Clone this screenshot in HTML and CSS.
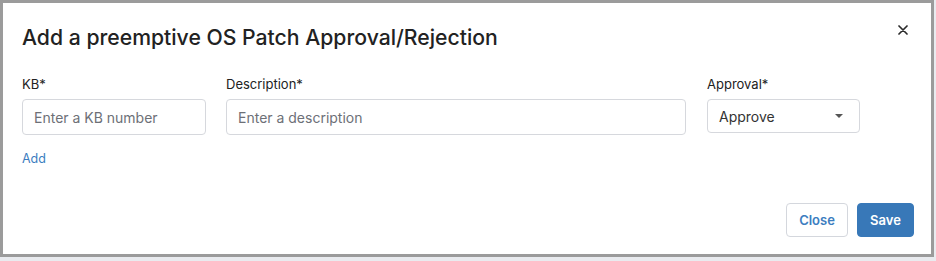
FILE: index.html
```html
<!DOCTYPE html>
<html>
<head>
<meta charset="utf-8">
<link rel="stylesheet" href="styles.css">
</head>
<body>
<div class="modal">
  <div class="header">
    <h1 class="title">Add a preemptive OS Patch Approval/Rejection</h1>
    <button class="close-x" aria-label="Close">
      <svg width="10" height="10" viewBox="0 0 10 10"><path d="M1 1L9 9M9 1L1 9" stroke="#2b2b2b" stroke-width="1.7" stroke-linecap="round"/></svg>
    </button>
  </div>
  <div class="fields">
    <div class="field kb">
      <label class="label">KB*</label>
      <input class="input" type="text" placeholder="Enter a KB number">
    </div>
    <div class="field desc">
      <label class="label">Description*</label>
      <input class="input" type="text" placeholder="Enter a description">
    </div>
    <div class="field approval">
      <label class="label">Approval*</label>
      <div class="select">
        <span class="select-value">Approve</span>
        <span class="caret"></span>
      </div>
    </div>
  </div>
  <a class="add-link" href="#">Add</a>
  <div class="footer">
    <button class="btn btn-secondary">Close</button>
    <button class="btn btn-primary">Save</button>
  </div>
</div>
</body>
</html>
```
FILE: styles.css
```css
html, body {
  margin: 0;
  padding: 0;
  background: #e9ebef;
  font-family: Inter, "Noto Sans", sans-serif;
}
.modal {
  box-sizing: border-box;
  width: 934px;
  height: 257px;
  border: 3px solid #9b9b9b;
  background: #fff;
  padding: 0 0 0 19px;
  display: flex;
  flex-direction: column;
}
.header {
  display: flex;
  justify-content: space-between;
  align-items: flex-start;
  padding-top: 21px;
}
.title {
  margin: 0;
  font-size: 21.2px;
  line-height: 26px;
  font-weight: 500;
  color: #222;
}
.close-x {
  border: 0;
  background: none;
  padding: 0;
  margin: 1px 23px 0 0;
  width: 10px;
  height: 10px;
  display: flex;
}
.fields {
  display: flex;
  margin-top: 26px;
}
.field {
  display: flex;
  flex-direction: column;
}
.kb { width: 184px; margin-right: 20px; }
.desc { width: 460px; margin-right: 21px; }
.approval { width: 153px; }
.label {
  font-size: 13px;
  line-height: 16px;
  color: #222;
  margin-bottom: 7px;
}
.input {
  box-sizing: border-box;
  height: 36px;
  border: 1px solid #d6d8dd;
  border-radius: 4px;
  padding: 0 11px;
  font-family: Inter, "Noto Sans", sans-serif;
  font-size: 14px;
  color: #333;
  outline: none;
}
.input::placeholder { color: #6d7077; }
.select {
  box-sizing: border-box;
  height: 34px;
  border: 1px solid #d6d8dd;
  border-radius: 4px;
  padding: 0 16px 0 11px;
  display: flex;
  align-items: center;
  justify-content: space-between;
}
.select-value {
  font-size: 14px;
  color: #333;
}
.caret {
  width: 0;
  height: 0;
  border-left: 4px solid transparent;
  border-right: 4px solid transparent;
  border-top: 4px solid #555;
}
.add-link {
  margin-top: 16px;
  font-size: 12.5px;
  line-height: 16px;
  color: #3c7dc0;
  text-decoration: none;
  align-self: flex-start;
}
.footer {
  margin-top: auto;
  margin-bottom: 17px;
  display: flex;
  justify-content: flex-end;
  gap: 9px;
  padding-right: 17px;
}
.btn {
  box-sizing: border-box;
  height: 34px;
  border-radius: 4px;
  font-family: Inter, "Noto Sans", sans-serif;
  font-size: 13px;
  font-weight: 600;
  padding: 0;
}
.btn-secondary {
  width: 62px;
  background: #fff;
  border: 1px solid #d4d7dd;
  color: #3c7dc0;
}
.btn-primary {
  width: 57px;
  background: #3878b8;
  border: 1px solid #3878b8;
  color: #fff;
}
```
